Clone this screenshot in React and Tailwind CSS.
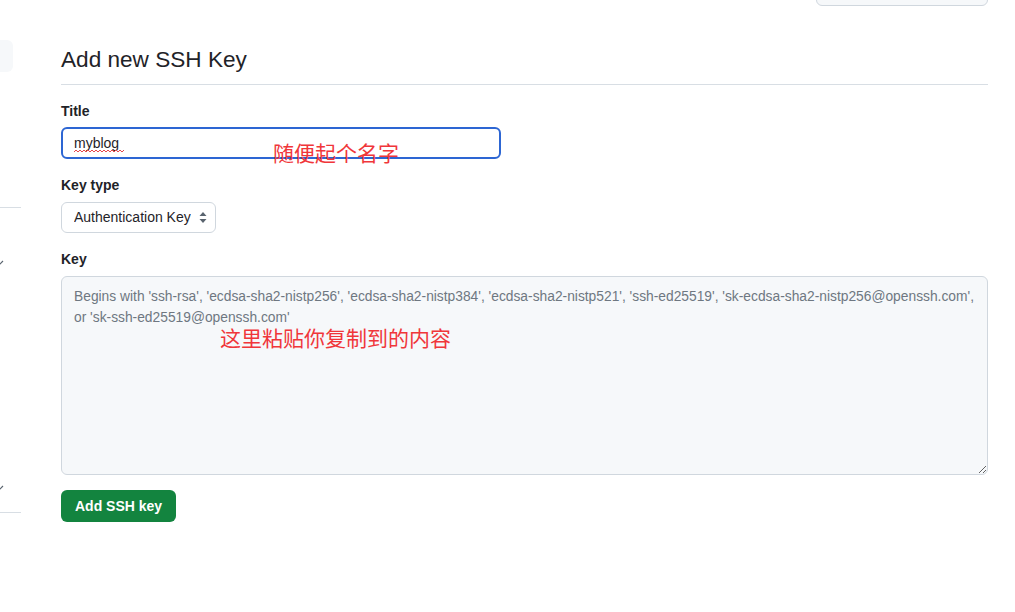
import React, { useState } from "react";

// Settings page: form to add a new SSH key, with two red annotations on top
export default function App() {
  const [title, setTitle] = useState("myblog");
  const [keyType, setKeyType] = useState("authentication");
  const [keyValue, setKeyValue] = useState("");

  const placeholder =
    "Begins with 'ssh-rsa', 'ecdsa-sha2-nistp256', 'ecdsa-sha2-nistp384', 'ecdsa-sha2-nistp521', 'ssh-ed25519', 'sk-ecdsa-sha2-nistp256@openssh.com',\nor 'sk-ssh-ed25519@openssh.com'";

  const font = { fontFamily: '"Liberation Sans", "Noto Sans CJK SC", sans-serif' };

  return (
    <div
      className="relative flex h-[612px] w-[1015px] overflow-hidden bg-white text-[#1f2328]"
      style={font}
    >
      {/* Sidebar remnant, scrolled mostly out of view */}
      <div className="flex w-[21px] shrink-0 flex-col">
        <div className="mt-[40px] h-[32px] w-[13px] rounded-r-md bg-[#f6f8fa]" />
        <div className="mt-[135px] border-b border-[#d8dee4]" />
        <div className="mt-[52px] flex h-[6px] w-[4px] overflow-hidden">
          <svg width="8" height="6" viewBox="0 0 8 6" className="-ml-[4px]">
            <path d="M1 1l3 3 3-3" fill="none" stroke="#59636e" strokeWidth="1.2" />
          </svg>
        </div>
        <div className="mt-[219px] flex h-[6px] w-[4px] overflow-hidden">
          <svg width="8" height="6" viewBox="0 0 8 6" className="-ml-[4px]">
            <path d="M1 1l3 3 3-3" fill="none" stroke="#59636e" strokeWidth="1.2" />
          </svg>
        </div>
        <div className="mt-[21px] border-b border-[#d8dee4]" />
      </div>

      {/* Main column */}
      <div className="ml-[40px] flex w-[927px] flex-col">
        <div className="-mt-[20px] flex justify-end">
          <div className="h-[26px] w-[172px] rounded-md border border-[#d0d7de] bg-[#f6f8fa]" />
        </div>

        <h2 className="mt-[39px] border-b border-[#d8dee4] pb-[9px] text-[22.6px] leading-[30px] font-normal">
          Add new SSH Key
        </h2>

        <label className="mt-[17px] text-[14px] leading-[18px] font-semibold">Title</label>
        <div className="relative mt-[7px] w-[440px]">
          <input
            type="text"
            value={title}
            onChange={(e) => setTitle(e.target.value)}
            className="h-[32px] w-full rounded-md border-2 border-[#2d66d3] px-[11px] text-[14px] outline-none"
          />
          {/* spell-check squiggle under the typed word */}
          <svg
            className="pointer-events-none absolute left-[13px] top-[22px]"
            width="50"
            height="4"
            viewBox="0 0 50 4"
          >
            <path
              d="M0 3 L2 1 L4 3 L6 1 L8 3 L10 1 L12 3 L14 1 L16 3 L18 1 L20 3 L22 1 L24 3 L26 1 L28 3 L30 1 L32 3 L34 1 L36 3 L38 1 L40 3 L42 1 L44 3 L46 1 L48 3 L50 1"
              fill="none"
              stroke="#e5484d"
              strokeWidth="1"
            />
          </svg>
        </div>

        <label className="mt-[17px] text-[14px] leading-[18px] font-semibold">Key type</label>
        <div className="relative mt-[8px] w-[155px]">
          <select
            value={keyType}
            onChange={(e) => setKeyType(e.target.value)}
            className="h-[31px] w-full appearance-none rounded-md border border-[#d0d7de] bg-white pl-[12px] pr-[24px] text-[14px] outline-none"
          >
            <option value="authentication">Authentication Key</option>
            <option value="signing">Signing Key</option>
          </select>
          <svg
            className="pointer-events-none absolute right-[9px] top-[9px]"
            width="8"
            height="13"
            viewBox="0 0 8 13"
          >
            <path d="M4 1l3.5 4h-7z" fill="#59636e" />
            <path d="M4 12l3.5-4h-7z" fill="#59636e" />
          </svg>
        </div>

        <label className="mt-[17px] text-[14px] leading-[18px] font-semibold">Key</label>
        <textarea
          value={keyValue}
          onChange={(e) => setKeyValue(e.target.value)}
          placeholder={placeholder}
          className="mt-[8px] h-[199px] w-full rounded-md border border-[#d0d7de] bg-[#f6f8fa] px-[12px] py-[9px] text-[13.8px] leading-[21px] text-[#1f2328] outline-none placeholder:text-[#6e7781]"
        />

        <div className="mt-[15px]">
          <button className="h-[32px] rounded-md bg-[#13843f] px-[14px] text-[14px] font-semibold text-white">
            Add SSH key
          </button>
        </div>
      </div>

      {/* Red annotations written over the screenshot */}
      <span
        className="pointer-events-none absolute left-[273px] top-[140px] text-[21px] leading-[24px] text-[#f0363a]"
        style={{ fontFamily: '"Noto Sans CJK SC", sans-serif' }}
      >
        随便起个名字
      </span>
      <span
        className="pointer-events-none absolute left-[220px] top-[325px] text-[21px] leading-[24px] text-[#f0363a]"
        style={{ fontFamily: '"Noto Sans CJK SC", sans-serif' }}
      >
        这里粘贴你复制到的内容
      </span>
    </div>
  );
}
